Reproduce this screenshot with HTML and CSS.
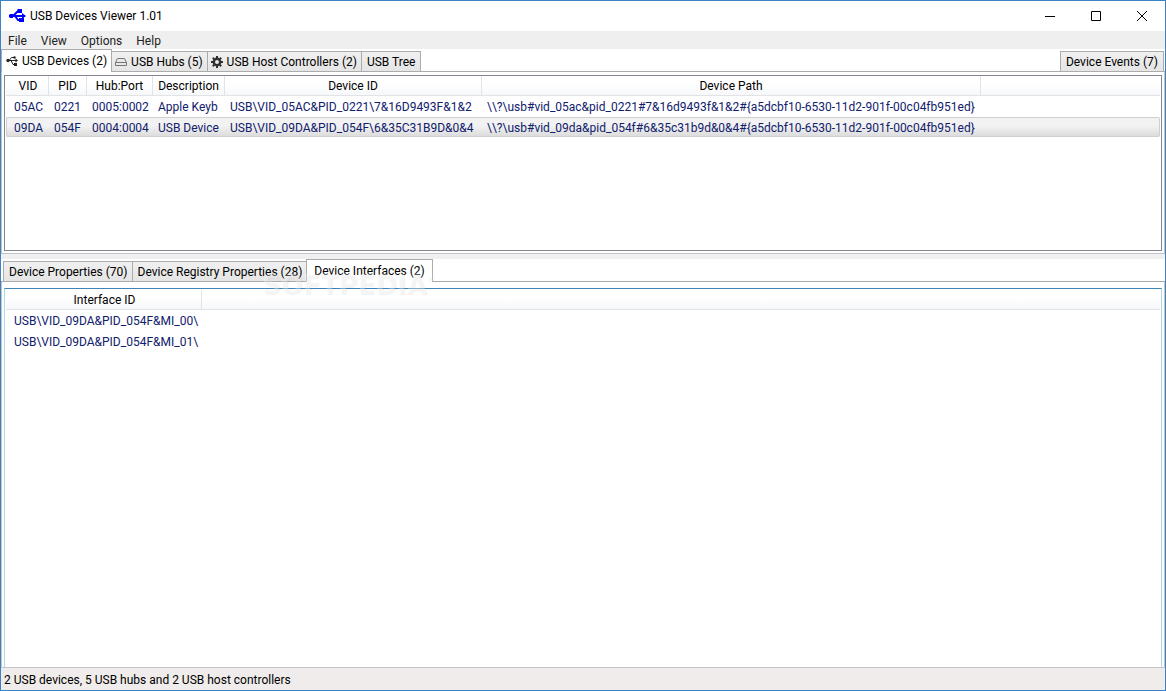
FILE: index.html
```html
<!DOCTYPE html>
<html lang="en">
<head>
<meta charset="utf-8">
<title>USB Devices Viewer 1.01</title>
<link rel="stylesheet" href="styles.css">
</head>
<body>
<div class="window">
  <header class="titlebar">
    <svg class="app-icon" width="17" height="16" viewBox="0 0 17 16" aria-hidden="true"><path d="M1 8h15M4 8l4-4h3M6 8l3 4h3" fill="none" stroke="#00f" stroke-width="2"/><path d="M1 6h3v4H1L0 9V7zM8 2l1-1h4v4H9zM10 10h5v4h-5zM13 5l4 3-4 3z" fill="#00f"/></svg>
    <h1 class="title">USB Devices Viewer 1.01</h1>
    <div class="window-buttons">
      <button class="window-button" aria-label="Minimize"><svg width="12" height="12" viewBox="0 0 12 12"><path d="M1 6.500h10" /></svg></button>
      <button class="window-button" aria-label="Maximize"><svg width="12" height="12" viewBox="0 0 12 12"><path d="M1.500 1.500h9v9h-9z"/></svg></button>
      <button class="window-button" aria-label="Close"><svg width="12" height="12" viewBox="0 0 12 12"><path d="M1 1l10 10M11 1L1 11"/></svg></button>
    </div>
  </header>
  <nav class="menu">
    <button class="menu-item">File</button>
    <button class="menu-item">View</button>
    <button class="menu-item">Options</button>
    <button class="menu-item">Help</button>
  </nav>
  <div class="tabs" role="tablist">
    <button class="tab selected" role="tab" aria-selected="true"><svg width="12" height="12" viewBox="0 0 12 12" aria-hidden="true"><g fill="none" stroke="#222"><path d="M1 5.500h10M3 5.500l2.500-3H8M5 5.500l2 4h2"/></g><g fill="#222"><circle cx="2" cy="5.500" r="1.700"/><circle cx="8.500" cy="2.500" r="1.200"/><path d="M8 8h3v3H8zM9.500 3.500l2.500 2-2.500 2z"/></g></svg>USB Devices (2)</button>
    <button class="tab" role="tab"><svg width="12" height="12" viewBox="0 0 12 12" aria-hidden="true"><path d="M2.500 2.500h7l2 4v3H.5v-3zM.5 6.500h11" fill="#e8e8e8" stroke="#777"/></svg>USB Hubs (5)</button>
    <button class="tab" role="tab"><svg width="12" height="12" viewBox="0 0 12 12" aria-hidden="true"><circle cx="6" cy="6" r="3.200" fill="none" stroke="#303030" stroke-width="2.400"/><path d="M6 0v2M6 10v2M0 6h2M10 6h2M1.800 1.800l1.400 1.400M8.800 8.800l1.400 1.400M10.200 1.800L8.800 3.200M3.200 8.800l-1.400 1.400" stroke="#303030" stroke-width="2"/></svg>USB Host Controllers (2)</button>
    <button class="tab" role="tab">USB Tree</button>
    <button class="tab events" role="tab">Device Events (7)</button>
  </div>
  <main class="content">
    <section class="pane devices-pane">
      <div class="list">
        <table class="grid">
          <colgroup><col class="c-vid"><col class="c-pid"><col class="c-port"><col class="c-desc"><col class="c-id"><col class="c-path"><col></colgroup>
          <thead><tr><th>VID</th><th>PID</th><th>Hub:Port</th><th>Description</th><th>Device ID</th><th>Device Path</th><th></th></tr></thead>
          <tbody>
            <tr><td>05AC</td><td>0221</td><td>0005:0002</td><td>Apple Keyb</td><td>USB\VID_05AC&amp;PID_0221\7&amp;16D9493F&amp;1&amp;2</td><td>\\?\usb#vid_05ac&amp;pid_0221#7&amp;16d9493f&amp;1&amp;2#{a5dcbf10-6530-11d2-901f-00c04fb951ed}</td><td></td></tr>
            <tr class="current"><td>09DA</td><td>054F</td><td>0004:0004</td><td>USB Device</td><td>USB\VID_09DA&amp;PID_054F\6&amp;35C31B9D&amp;0&amp;4</td><td>\\?\usb#vid_09da&amp;pid_054f#6&amp;35c31b9d&amp;0&amp;4#{a5dcbf10-6530-11d2-901f-00c04fb951ed}</td><td></td></tr>
          </tbody>
        </table>
      </div>
    </section>
    <div class="splitter"></div>
    <div class="tabs details-tabs" role="tablist">
      <button class="tab" role="tab">Device Properties (70)</button>
      <button class="tab" role="tab">Device Registry Properties (28)</button>
      <button class="tab selected" role="tab" aria-selected="true">Device Interfaces (2)</button>
      <span class="watermark">SOFTPEDIA<sup>®</sup></span>
    </div>
    <section class="pane details-pane">
      <div class="list focused">
        <table class="grid">
          <colgroup><col class="c-interface"><col></colgroup>
          <thead><tr><th>Interface ID</th><th></th></tr></thead>
          <tbody>
            <tr><td>USB\VID_09DA&amp;PID_054F&amp;MI_00\</td><td></td></tr>
            <tr><td>USB\VID_09DA&amp;PID_054F&amp;MI_01\</td><td></td></tr>
          </tbody>
        </table>
      </div>
    </section>
  </main>
  <footer class="status">2 USB devices, 5 USB hubs and 2 USB host controllers</footer>
</div>
</body>
</html>
```
FILE: styles.css
```css
* { box-sizing: border-box; }
body { margin: 0; font: 12px/16px Roboto, "Open Sans", sans-serif; color: #000; }
button { font: inherit; color: inherit; border: 0; background: none; padding: 0; }
svg { display: block; flex: none; }
.window { height: 100vh; display: flex; flex-direction: column; border: 1px solid #3b82c9; background: #fff; overflow: hidden; }
.titlebar { display: flex; align-items: center; height: 30px; flex: none; padding-left: 8px; gap: 4px; }
.title { margin: 0; font-size: 12px; font-weight: 400; }
.window-buttons { display: flex; margin-left: auto; }
.window-button { width: 46px; height: 29px; display: grid; place-items: center; }
.window-button svg { fill: none; stroke: #000; }
.menu { display: flex; flex: none; height: 18px; background: #efefef; padding: 2px 0 0 7px; gap: 14px; align-items: center; color: #222; }
.tabs { display: flex; flex: none; align-items: flex-end; height: 23px; position: relative; box-shadow: inset 0 -1px #aaa; }
.tab { display: flex; align-items: center; gap: 4px; height: 21px; padding: 0 4px 0 3px; border: 1px solid #acacac; background: linear-gradient(#f0f0f0, #e5e5e5); white-space: nowrap; margin-right: -1px; }
.tab.selected { height: 23px; background: #fff; border-bottom: 0; padding: 0 4px; }
.tab:nth-child(4) { padding: 0 5px; }
.tab.events { margin: 0 1px 0 auto; padding: 0 5px; }
.content { flex: 1; min-height: 0; display: flex; flex-direction: column; }
.pane { border: 1px solid #c4c4c4; border-top: 0; padding: 3px 2px 2px; }
.devices-pane { height: 182px; flex: none; }
.details-pane { flex: 1; min-height: 0; padding: 6px 2px 0; }
.list { height: 100%; border: 1px solid #828790; padding: 0 1px; overflow: hidden; }
.list.focused { border-color: #3d85b8 #b5d7ee transparent; border-bottom: 0; padding-top: 1px; }
.splitter { height: 5px; flex: none; background: #f0f0f0; }
.details-tabs { padding-left: 2px; }
.details-tabs .tab { padding: 0 4px 0 5px; }
.details-tabs .selected { padding: 0 7px; }
.grid { width: 100%; table-layout: fixed; border-collapse: separate; border-spacing: 0; }
.c-vid { width: 43px; }
.c-pid { width: 38px; }
.c-port { width: 66px; }
.c-desc { width: 72px; }
.c-id { width: 257px; }
.c-path { width: 499px; }
.c-interface { width: 196px; }
.grid th { height: 20px; padding: 0; font-weight: 400; border: 1px solid #e2e3e6; border-width: 0 1px 1px 0; background: linear-gradient(#fff 40%, #f7f8fa); }
.grid th:first-child { padding-left: 2px; }
.grid th:last-child { border-right: 0; }
.grid td { height: 21px; padding: 0 0 0 5px; color: #10206c; white-space: nowrap; }
.grid td:first-child { padding-left: 8px; }
.grid .current td { height: 20px; padding-top: 1px; background: linear-gradient(#f2f2f2 45%, #dcdcdc); border: 1px solid #d0d0d0; border-width: 1px 0; }
.grid .current td:first-child { border-left-width: 1px; padding-left: 7px; border-radius: 2px 0 0 2px; }
.grid .current td:last-child { border-right-width: 1px; border-radius: 0 2px 2px 0; }
.watermark { position: absolute; left: 261px; top: 10px; z-index: 1; font: 700 26px/32px "DejaVu Sans", sans-serif; color: rgba(255, 255, 255, .35); text-shadow: 1px 1px 1px rgba(0, 0, 0, .06); pointer-events: none; }
.watermark sup { font-size: 8px; line-height: 10px; vertical-align: 12px; }
.status { flex: none; height: 22px; background: #f0eceb; padding: 4px 3px 2px; }
```
